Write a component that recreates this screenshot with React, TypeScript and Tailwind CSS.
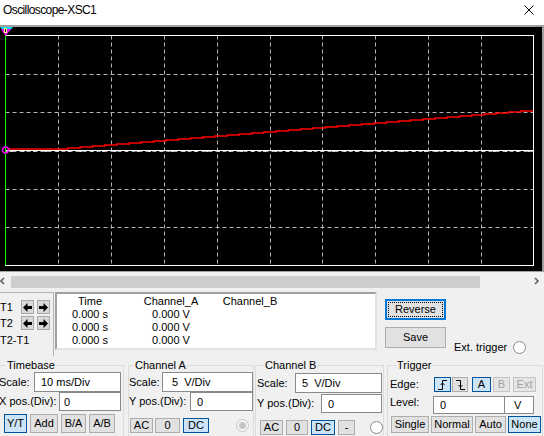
import React from 'react';

type BtnProps = {
  children: React.ReactNode;
  className?: string;
  active?: boolean;
  disabled?: boolean;
};

const Btn: React.FC<BtnProps> = ({ children, className = '', active, disabled }) => (
  <button
    className={`flex items-center justify-center border leading-none ${
      active
        ? 'bg-[#cce4f7] border-[#005499]'
        : disabled
        ? 'bg-[#e5e5e5] border-[#c4c4c4] text-[#a0a0a0]'
        : 'bg-[#e1e1e1] border-[#adadad]'
    } ${className}`}
  >
    {children}
  </button>
);

const Field: React.FC<{ value: string; className?: string }> = ({ value, className = '' }) => (
  <input
    readOnly
    value={value}
    className={`bg-white border border-[#8a8a8a] outline-none text-[11px] text-black ${className}`}
  />
);

const Radio: React.FC<{ checked?: boolean; className?: string }> = ({ checked, className = '' }) => (
  <div
    className={`w-[13px] h-[13px] rounded-full border flex items-center justify-center ${
      checked ? 'border-[#c8c8c8] bg-[#f4f4f4]' : 'border-[#8a8a8a] bg-white'
    } ${className}`}
  >
    {checked && <div className="w-[7px] h-[7px] rounded-full bg-[#c6c6c6]" />}
  </div>
);

const Arrow: React.FC<{ dir: 'l' | 'r' }> = ({ dir }) => (
  <div className="w-[13px] h-[14px] bg-[#d9d9d9] border border-[#a8a8a8] flex items-center justify-center">
    <svg width="9" height="9" viewBox="0 0 9 9">
      <polygon
        points={dir === 'l' ? '0,4.5 4.5,0 4.5,3 9,3 9,6 4.5,6 4.5,9' : '9,4.5 4.5,0 4.5,3 0,3 0,6 4.5,6 4.5,9'}
        fill="#000"
      />
    </svg>
  </div>
);

function Scope() {
  const left = 5.5;
  const right = 533.5;
  const top = 8.5;
  const bottom = 238.5;
  const dx = (right - left) / 10;
  const dy = (bottom - top) / 6;

  let red = 'M8 122 H68';
  const steps = 38;
  for (let i = 1; i <= steps; i++) {
    red += ` V${122 - i} H${(68 + (i * 465) / steps).toFixed(1)}`;
  }

  const ticks: number[] = [];
  for (let x = 10; x < 530; x += 11.5) ticks.push(x);

  return (
    <svg width="542" height="244" className="block shrink-0">
      <rect x="0" y="0" width="542" height="244" fill="#000" />
      {/* grid */}
      {Array.from({ length: 9 }).map((_, i) => (
        <line
          key={'v' + i}
          x1={Math.round(left + dx * (i + 1)) + 0.5}
          x2={Math.round(left + dx * (i + 1)) + 0.5}
          y1={top}
          y2={bottom}
          stroke="#b4b4b4"
          strokeDasharray="4 3"
        />
      ))}
      {Array.from({ length: 5 }).map((_, i) => (
        <line
          key={'h' + i}
          x1={left}
          x2={right}
          y1={Math.round(top + dy * (i + 1)) + 0.5}
          y2={Math.round(top + dy * (i + 1)) + 0.5}
          stroke="#b4b4b4"
          strokeDasharray="4 3"
        />
      ))}
      <rect x={left} y={top} width={right - left} height={bottom - top} fill="none" stroke="#fff" />
      {/* traces */}
      <line x1="5" x2="533" y1="123.5" y2="123.5" stroke="#fff" />
      {ticks.map((x) => (
        <line key={x} x1={x} x2={x + 3} y1="124.5" y2="124.5" stroke="#d8d8d8" />
      ))}
      <path d={red} stroke="#ff0000" strokeWidth="1.6" fill="none" />
      {/* cursor */}
      <line x1="5.5" x2="5.5" y1={top} y2={bottom} stroke="#00ff00" />
      <polygon points="0,0 13,0 6.5,7" fill="#00e0ff" />
      <polygon points="1,2 11,2 5.5,9" fill="#ff00ff" />
      <rect x="4" y="1" width="3" height="5" fill="#ffff80" />
      <rect x="5" y="2" width="1" height="3" fill="#000" />
      <circle cx="5.5" cy="123" r="3" fill="none" stroke="#ff00ff" strokeWidth="1.5" />
    </svg>
  );
}

export default function App() {
  return (
    <div
      className="w-[544px] h-[436px] bg-[#f0f0f0] overflow-hidden flex flex-col text-[11px] text-black"
      style={{ fontFamily: '"Liberation Sans", Arial, sans-serif' }}
    >
      {/* Title bar */}
      <div className="shrink-0 h-[25px] bg-white flex items-start justify-between pl-[3px] pr-[10px] pt-[3px]">
        <span className="text-[12px] tracking-[-0.6px] leading-[14px]">Oscilloscope-XSC1</span>
        <svg width="10" height="10" className="mt-[2px]">
          <path d="M0.5 0.5 L9.5 9.5 M9.5 0.5 L0.5 9.5" stroke="#000" />
        </svg>
      </div>

      {/* Screen */}
      <div className="shrink-0 flex border-t-2 border-b border-[#a0a0a0]">
        <Scope />
        <div className="w-[2px] bg-[#a0a0a0]" />
      </div>

      {/* Scrollbar */}
      <div className="shrink-0 h-[17px] flex items-start">
        <svg width="11" height="17" className="shrink-0">
          <path d="M4 6 L1 9 L4 12" stroke="#606060" strokeWidth="1.6" fill="none" />
        </svg>
        <div className="mt-[4px] w-[469px] h-[12px] bg-[#cdcdcd]" />
        <div className="flex-1" />
        <svg width="11" height="17" className="shrink-0 mr-[2px]">
          <path d="M4 6 L7 9 L4 12" stroke="#606060" strokeWidth="1.6" fill="none" />
        </svg>
      </div>

      {/* Cursor readout row */}
      <div className="shrink-0 mt-[3px] h-[67px] flex items-start">
        <div className="w-[54px] h-[64px] border-t border-r border-[#b4b4b4] pt-[7px] flex flex-col">
          <div className="h-[14px] flex items-center">
            <span className="w-[21px]">T1</span>
            <Arrow dir="l" />
            <div className="w-[3px]" />
            <Arrow dir="r" />
          </div>
          <div className="mt-[2px] h-[14px] flex items-center">
            <span className="w-[21px]">T2</span>
            <Arrow dir="l" />
            <div className="w-[3px]" />
            <Arrow dir="r" />
          </div>
          <span className="mt-[4px] leading-[13px]">T2-T1</span>
        </div>

        <div className="ml-[1px] w-[322px] h-[58px] bg-white border-2 border-t-[#a0a0a0] border-l-[#a0a0a0] border-r-[#e3e3e3] border-b-[#e3e3e3] pt-[1px] grid grid-cols-[66px_96px_62px] auto-rows-[13px] leading-[13px] text-center">
          <span>Time</span>
          <span>Channel_A</span>
          <span>Channel_B</span>
          <span>0.000 s</span>
          <span>0.000 V</span>
          <span />
          <span>0.000 s</span>
          <span>0.000 V</span>
          <span />
          <span>0.000 s</span>
          <span>0.000 V</span>
          <span />
        </div>

        <div className="ml-[8px] flex flex-col">
          <button className="mt-[7px] w-[61px] h-[21px] bg-[#e1e1e1] border-2 border-[#0078d7] p-px">
            <div className="w-full h-full border border-dotted border-black flex items-center justify-center">
              Reverse
            </div>
          </button>
          <button className="mt-[7px] w-[61px] h-[21px] bg-[#e1e1e1] border border-[#adadad]">Save</button>
        </div>

        <div className="ml-[8px] mt-[49px] flex items-center">
          <span className="leading-[13px]">Ext. trigger</span>
          <Radio className="ml-[6px]" />
        </div>
      </div>

      {/* Group boxes */}
      <div className="shrink-0 flex items-start">
        {/* Timebase */}
        <fieldset className="-ml-[6px] w-[130px] h-[82px] border border-[#dcdcdc] pl-[4px]">
          <legend className="ml-[7px] px-px leading-[13px]">Timebase</legend>
          <div className="flex items-center h-[20px]">
            <span className="w-[35px]">Scale:</span>
            <Field value="10 ms/Div" className="w-[87px] h-[20px] pl-[6px]" />
          </div>
          <div className="flex items-center h-[19px]">
            <span className="w-[60px] whitespace-nowrap">X pos.(Div):</span>
            <Field value="0" className="w-[62px] h-[19px] pl-[4px]" />
          </div>
          <div className="mt-[3px] ml-[5px] flex">
            <Btn active className="w-[23px] h-[19px]">Y/T</Btn>
            <Btn className="ml-[3px] w-[28px] h-[19px]">Add</Btn>
            <Btn className="ml-[3px] w-[25px] h-[19px]">B/A</Btn>
            <Btn className="ml-[3px] w-[26px] h-[19px]">A/B</Btn>
          </div>
        </fieldset>

        {/* Channel A */}
        <fieldset className="ml-[4px] w-[126px] h-[82px] border border-[#dcdcdc] pl-0">
          <legend className="ml-[5px] px-px leading-[13px]">Channel A</legend>
          <div className="flex items-center h-[20px]">
            <span className="w-[33px]">Scale:</span>
            <Field value="5  V/Div" className="w-[91px] h-[20px] pl-[9px] whitespace-pre" />
          </div>
          <div className="flex items-center h-[19px]">
            <span className="w-[61px] whitespace-nowrap">Y pos.(Div):</span>
            <Field value="0" className="w-[63px] h-[19px] pl-[6px]" />
          </div>
          <div className="mt-[7px] ml-[1px] flex items-center">
            <Btn className="w-[23px] h-[15px]">AC</Btn>
            <Btn className="ml-[2px] w-[25px] h-[15px]">0</Btn>
            <Btn active className="ml-[3px] w-[26px] h-[15px]">DC</Btn>
            <Radio checked className="ml-[27px]" />
          </div>
        </fieldset>

        {/* Channel B */}
        <fieldset className="ml-[1px] w-[129px] h-[82px] border border-[#dcdcdc] pl-px">
          <legend className="ml-[7px] px-px leading-[13px]">Channel B</legend>
          <div className="mt-px flex items-center h-[20px]">
            <span className="w-[38px]">Scale:</span>
            <Field value="5  V/Div" className="w-[87px] h-[20px] pl-[6px]" />
          </div>
          <div className="mt-px flex items-center h-[19px]">
            <span className="w-[64px] whitespace-nowrap">Y pos.(Div):</span>
            <Field value="0" className="w-[61px] h-[19px] pl-[6px]" />
          </div>
          <div className="mt-[7px] ml-[3px] flex items-center">
            <Btn className="w-[23px] h-[15px]">AC</Btn>
            <Btn className="ml-[3px] w-[22px] h-[15px]">0</Btn>
            <Btn active className="ml-[3px] w-[24px] h-[15px]">DC</Btn>
            <Btn className="ml-[3px] w-[17px] h-[15px]">-</Btn>
            <Radio className="ml-[15px]" />
          </div>
        </fieldset>

        {/* Trigger */}
        <fieldset className="ml-[3px] w-[156px] h-[82px] border border-[#dcdcdc] pl-[2px] relative">
          <legend className="ml-[6px] px-px leading-[13px]">Trigger</legend>
          <div className="mt-[5px] flex items-center h-[15px]">
            <span className="w-[44px]">Edge:</span>
            <Btn active className="w-[17px] h-[15px]">
              <svg width="11" height="10">
                <path d="M1 9.5 H5.5 V0.5 H10" stroke="#000" fill="none" />
                <path d="M3.5 5 L5.5 3 L7.5 5" stroke="#000" fill="none" />
              </svg>
            </Btn>
            <Btn className="ml-px w-[16px] h-[15px]">
              <svg width="11" height="10">
                <path d="M1 0.5 H5.5 V9.5 H10" stroke="#000" fill="none" />
                <path d="M3.5 5 L5.5 7 L7.5 5" stroke="#000" fill="none" />
              </svg>
            </Btn>
            <Btn active className="ml-[4px] w-[19px] h-[15px]">A</Btn>
            <Btn disabled className="ml-[2px] w-[17px] h-[15px]">B</Btn>
            <Btn disabled className="ml-[3px] w-[23px] h-[15px]">Ext</Btn>
          </div>
          <div className="mt-[4px] flex items-start h-[18px]">
            <span className="w-[43px] leading-[13px]">Level:</span>
            <Field value="0" className="w-[72px] h-[18px] pl-[6px]" />
            <Field value="V" className="-ml-px w-[30px] h-[18px] pl-[9px]" />
          </div>
          <div className="mt-[2px] ml-px flex">
            <Btn className="w-[38px] h-[17px]">Single</Btn>
            <Btn className="ml-[2px] w-[42px] h-[17px]">Normal</Btn>
            <Btn className="ml-[2px] w-[31px] h-[17px]">Auto</Btn>
            <Btn active className="ml-[2px] w-[33px] h-[17px]">None</Btn>
          </div>
          <svg width="7" height="7" className="absolute right-[1px] top-[65px]">
            <rect x="5" y="1" width="1" height="1" fill="#b0b0b0" />
            <rect x="3" y="3" width="1" height="1" fill="#b0b0b0" />
            <rect x="5" y="3" width="1" height="1" fill="#b0b0b0" />
            <rect x="1" y="5" width="1" height="1" fill="#b0b0b0" />
            <rect x="3" y="5" width="1" height="1" fill="#b0b0b0" />
            <rect x="5" y="5" width="1" height="1" fill="#b0b0b0" />
          </svg>
        </fieldset>
      </div>
    </div>
  );
}
